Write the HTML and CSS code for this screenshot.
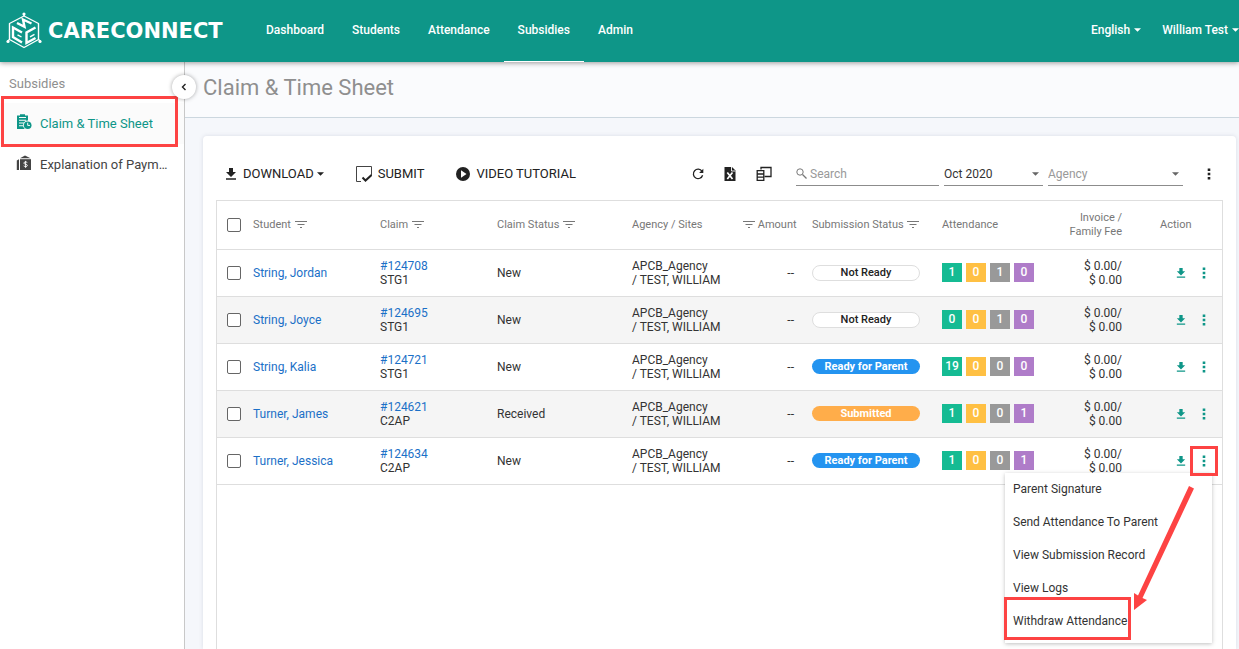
FILE: index.html
```html
<!DOCTYPE html>
<html lang="en">
<head>
<meta charset="utf-8">
<title>Claim &amp; Time Sheet</title>
<link rel="stylesheet" href="styles.css">
</head>
<body>
<svg class="sprite" aria-hidden="true">
  <symbol id="i-filter" viewBox="0 0 12 8"><path d="M0 1.500h12M2.500 4.500h7M5 7.500h2" fill="none" stroke="currentColor"/></symbol>
  <symbol id="i-download" viewBox="0 0 12 12"><path d="M4 0h4v4h3L6 9 1 4h3zM1 10.200h10v1.600H1z" fill="currentColor"/></symbol>
  <symbol id="i-dots" viewBox="0 0 4 12"><path d="M.7.5h2.600v2.600H.7zM.7 4.700h2.600v2.600H.7zM.7 8.900h2.600v2.600H.7z" fill="currentColor"/></symbol>
  <symbol id="i-caret" viewBox="0 0 8 4"><path d="M0 0h8L4 4z" fill="currentColor"/></symbol>
</svg>

<header class="topbar">
  <a class="brand" href="#">
    <svg class="brand-mark" viewBox="0 0 36 38" aria-hidden="true">
      <g fill="none" stroke="#fff" stroke-width="1.400" stroke-linejoin="round">
        <path d="M18 4 32.500 11.500V27.500L18 35.500 3.500 27.500V11.500z"/>
        <path d="M18 1v3M1.500 29l2-1.500M34.500 29l-2-1.500"/>
      </g>
      <g fill="none" stroke="#fff" stroke-width="2.400">
        <path d="m11 11 7.500 3.800-1.500-7.300 8.500 4"/>
        <path d="M16 20.500 7 15.500v9.500l9 5.500"/>
        <path d="M29.500 15.500 20.500 20.500v10.500l9-5"/>
        <path d="m15.500 25-4-2.200M24 24.800l4.500-2.500" stroke-width="1.400"/>
      </g>
      <circle cx="18" cy="2" r="1.600" fill="#fff"/><circle cx="2" cy="29.500" r="1.600" fill="#fff"/><circle cx="34" cy="29.500" r="1.600" fill="#fff"/>
    </svg>
    <span class="brand-name">CARECONNECT</span>
  </a>
  <nav class="mainnav">
    <a href="#">Dashboard</a>
    <a href="#">Students</a>
    <a href="#">Attendance</a>
    <a class="active" href="#">Subsidies</a>
    <a href="#">Admin</a>
  </nav>
  <div class="account">
    <button type="button">English <svg class="caret"><use href="#i-caret"/></svg></button>
    <button type="button">William Test <svg class="caret"><use href="#i-caret"/></svg></button>
  </div>
</header>

<div class="shell">
  <aside class="sidebar">
    <h2 class="side-title">Subsidies</h2>
    <nav class="sidenav">
      <a class="active marked" href="#">
        <svg viewBox="0 0 16 16" aria-hidden="true"><path d="M1 1.500h3V.3h5v1.200h3V15H1z" fill="currentColor"/><path d="M3 3.500h7M3 6.300h7M3 9h7M3 11.800h7" stroke="#fbfbfb" stroke-width="1.100" fill="none"/><circle cx="11.700" cy="11.200" r="4.700" fill="#fbfbfb"/><circle cx="11.700" cy="11.200" r="3.800" fill="currentColor"/><path d="M11.700 8.700v2.700H14" fill="none" stroke="#fbfbfb"/></svg>
        <span>Claim &amp; Time Sheet</span>
      </a>
      <a href="#">
        <svg viewBox="0 0 16 16" aria-hidden="true"><path d="M4 3.300 9 .5l5.500 2.800z" fill="currentColor"/><path d="M4 4.200h11V15H4z" fill="currentColor"/><path d="m.8 5.500 2.200-1.300V15H.8z" fill="currentColor"/><path d="M11.300 7.500c-1-.8-3.500-.7-3.500.6 0 1.500 3.600.8 3.600 2.300 0 1.400-2.600 1.500-3.700.5M9.600 5.900v7" fill="none" stroke="#fff" stroke-width=".9"/></svg>
        <span>Explanation of Payments</span>
      </a>
    </nav>
    <button class="collapse" type="button" aria-label="Collapse menu"><svg viewBox="0 0 6 8"><path d="M4.500 1 1.500 4l3 3" fill="none" stroke="#222" stroke-width="1.400"/></svg></button>
  </aside>

  <main class="main">
    <div class="pagehead"><h1>Claim &amp; Time Sheet</h1></div>
    <section class="card">
      <div class="toolbar">
        <div class="actions">
          <button type="button"><svg class="i12"><use href="#i-download"/></svg>DOWNLOAD<svg class="caret"><use href="#i-caret"/></svg></button>
          <button type="button"><svg class="i16" viewBox="0 0 16 16"><path d="M5 15.500H.5V.5h15v9" fill="none" stroke="#444"/><path d="m6.500 11.500 3 3 6-5.500" fill="none" stroke="#222" stroke-width="2"/></svg>SUBMIT</button>
          <button type="button"><svg class="i14" viewBox="0 0 14 14"><circle cx="7" cy="7" r="7" fill="#222"/><path d="M5 3.200 10.500 7 5 10.800z" fill="#fff"/></svg>VIDEO TUTORIAL</button>
        </div>
        <div class="tools">
          <button type="button" aria-label="Refresh"><svg class="i12" viewBox="0 0 12 12"><path d="M10 3.300A4.700 4.700 0 1 0 10.600 7.200" fill="none" stroke="#222" stroke-width="1.300"/><path d="M11.300.8v4.200H7.100z" fill="#222"/></svg></button>
          <button type="button" aria-label="Export to Excel"><svg class="i14" viewBox="0 0 14 14"><path d="M1.500 0H9l3.500 3.500V14h-11z" fill="#222"/><path d="M8.500 0v4h4" fill="none" stroke="#fff" stroke-width=".9"/><path d="m4.300 5.500 5.200 6.500M9.500 5.500 4.300 12" stroke="#fff" stroke-width="1.700"/></svg></button>
          <button type="button" aria-label="Choose columns"><svg class="i16" viewBox="0 0 16 16"><g fill="none" stroke="#222" stroke-width="1.300"><path d="M5 3.500V1.500h10v9H8.500"/><path d="M1.200 4.600h6.600v9.800H1.200zM1 8h7M1 11.200h7"/></g></svg></button>
        </div>
        <div class="filters">
          <label class="field search"><svg viewBox="0 0 11 11"><circle cx="4" cy="4" r="3.200" fill="none" stroke="#777"/><path d="m6.500 6.500 4 4" stroke="#777" stroke-width="1.300"/></svg><input type="text" placeholder="Search" aria-label="Search"></label>
          <label class="field month"><select aria-label="Month"><option>Oct 2020</option></select><svg class="caret"><use href="#i-caret"/></svg></label>
          <label class="field agency"><select aria-label="Agency"><option>Agency</option></select><svg class="caret"><use href="#i-caret"/></svg></label>
        </div>
        <button class="more" type="button" aria-label="More"><svg class="dots"><use href="#i-dots"/></svg></button>
      </div>

      <div class="grid">
        <table>
          <colgroup><col class="c-check"><col class="c-student"><col class="c-claim"><col class="c-status"><col class="c-agency"><col class="c-amount"><col class="c-sub"><col class="c-att"><col class="c-fee"><col class="c-act"></colgroup>
          <thead>
            <tr>
              <th class="check"><input type="checkbox" aria-label="Select all"></th>
              <th>Student <svg class="filter"><use href="#i-filter"/></svg></th>
              <th>Claim <svg class="filter"><use href="#i-filter"/></svg></th>
              <th>Claim Status <svg class="filter"><use href="#i-filter"/></svg></th>
              <th>Agency / Sites</th>
              <th class="amount"><svg class="filter"><use href="#i-filter"/></svg> Amount</th>
              <th>Submission Status <svg class="filter"><use href="#i-filter"/></svg></th>
              <th>Attendance</th>
              <th class="fee">Invoice /<br>Family Fee</th>
              <th class="act-head">Action</th>
            </tr>
          </thead>
          <tbody>
            <tr>
              <td class="check"><input type="checkbox" aria-label="Select String, Jordan"></td>
              <td><a href="#">String, Jordan</a></td>
              <td><a href="#">#124708</a><br>STG1</td>
              <td>New</td>
              <td>APCB_Agency<br>/ TEST, WILLIAM</td>
              <td class="amount">--</td>
              <td><span class="pill plain">Not Ready</span></td>
              <td><div class="counts"><b class="g">1</b><b class="y">0</b><b class="s">1</b><b class="p">0</b></div></td>
              <td class="fee">$ 0.00/<br>$ 0.00</td>
              <td><div class="rowacts"><button type="button" aria-label="Download"><svg class="i10"><use href="#i-download"/></svg></button><button type="button" aria-label="Row menu"><svg class="dots"><use href="#i-dots"/></svg></button></div></td>
            </tr>
            <tr>
              <td class="check"><input type="checkbox" aria-label="Select String, Joyce"></td>
              <td><a href="#">String, Joyce</a></td>
              <td><a href="#">#124695</a><br>STG1</td>
              <td>New</td>
              <td>APCB_Agency<br>/ TEST, WILLIAM</td>
              <td class="amount">--</td>
              <td><span class="pill plain">Not Ready</span></td>
              <td><div class="counts"><b class="g">0</b><b class="y">0</b><b class="s">1</b><b class="p">0</b></div></td>
              <td class="fee">$ 0.00/<br>$ 0.00</td>
              <td><div class="rowacts"><button type="button" aria-label="Download"><svg class="i10"><use href="#i-download"/></svg></button><button type="button" aria-label="Row menu"><svg class="dots"><use href="#i-dots"/></svg></button></div></td>
            </tr>
            <tr>
              <td class="check"><input type="checkbox" aria-label="Select String, Kalia"></td>
              <td><a href="#">String, Kalia</a></td>
              <td><a href="#">#124721</a><br>STG1</td>
              <td>New</td>
              <td>APCB_Agency<br>/ TEST, WILLIAM</td>
              <td class="amount">--</td>
              <td><span class="pill blue">Ready for Parent</span></td>
              <td><div class="counts"><b class="g">19</b><b class="y">0</b><b class="s">0</b><b class="p">0</b></div></td>
              <td class="fee">$ 0.00/<br>$ 0.00</td>
              <td><div class="rowacts"><button type="button" aria-label="Download"><svg class="i10"><use href="#i-download"/></svg></button><button type="button" aria-label="Row menu"><svg class="dots"><use href="#i-dots"/></svg></button></div></td>
            </tr>
            <tr>
              <td class="check"><input type="checkbox" aria-label="Select Turner, James"></td>
              <td><a href="#">Turner, James</a></td>
              <td><a href="#">#124621</a><br>C2AP</td>
              <td>Received</td>
              <td>APCB_Agency<br>/ TEST, WILLIAM</td>
              <td class="amount">--</td>
              <td><span class="pill orange">Submitted</span></td>
              <td><div class="counts"><b class="g">1</b><b class="y">0</b><b class="s">0</b><b class="p">1</b></div></td>
              <td class="fee">$ 0.00/<br>$ 0.00</td>
              <td><div class="rowacts"><button type="button" aria-label="Download"><svg class="i10"><use href="#i-download"/></svg></button><button type="button" aria-label="Row menu"><svg class="dots"><use href="#i-dots"/></svg></button></div></td>
            </tr>
            <tr>
              <td class="check"><input type="checkbox" aria-label="Select Turner, Jessica"></td>
              <td><a href="#">Turner, Jessica</a></td>
              <td><a href="#">#124634</a><br>C2AP</td>
              <td>New</td>
              <td>APCB_Agency<br>/ TEST, WILLIAM</td>
              <td class="amount">--</td>
              <td><span class="pill blue">Ready for Parent</span></td>
              <td><div class="counts"><b class="g">1</b><b class="y">0</b><b class="s">0</b><b class="p">1</b></div></td>
              <td class="fee">$ 0.00/<br>$ 0.00</td>
              <td class="open">
                <div class="rowacts"><button type="button" aria-label="Download"><svg class="i10"><use href="#i-download"/></svg></button><button type="button" aria-label="Row menu" aria-expanded="true"><svg class="dots"><use href="#i-dots"/></svg></button></div>
                <div class="menu">
                  <button type="button">Parent Signature</button>
                  <button type="button">Send Attendance To Parent</button>
                  <button type="button">View Submission Record</button>
                  <button type="button">View Logs</button>
                  <button class="target" type="button">Withdraw Attendance</button>
                  <svg class="arrow" viewBox="0 0 64 128" aria-hidden="true"><path d="M59 2 64 4.500 12.500 114 17 116 4 126 4 109 8 111.500z" fill="#fd4343"/></svg>
                </div>
                <span class="ring"></span>
              </td>
            </tr>
          </tbody>
        </table>
      </div>
    </section>
  </main>
</div>
</body>
</html>
```

FILE: styles.css
```css
* { box-sizing: border-box; }
html, body { height: 100%; }
body {
  margin: 0;
  display: flex;
  flex-direction: column;
  overflow: hidden;
  background: #f5f7fb;
  color: #333;
  font-family: Roboto, "Liberation Sans", sans-serif;
  font-size: 12px;
  line-height: 14px;
}
a { color: inherit; text-decoration: none; }
button {
  padding: 0;
  border: 0;
  background: none;
  color: inherit;
  font: inherit;
  cursor: pointer;
}
svg { display: block; flex: none; }
.sprite { position: absolute; width: 0; height: 0; }
.caret { width: 7px; height: 4px; }
.dots { width: 4px; height: 12px; }
.i10 { width: 10px; height: 10px; }
.i12 { width: 12px; height: 12px; }
.i14 { width: 14px; height: 14px; }
.i16 { width: 16px; height: 16px; }

/* Top bar */
.topbar {
  position: relative;
  z-index: 2;
  flex: none;
  display: flex;
  height: 62px;
  background: #0e9688;
  color: #fff;
  box-shadow: 0 1px 5px rgba(0, 0, 0, .4);
  font-size: 12px;
  font-weight: 500;
}
.brand {
  display: flex;
  align-items: center;
  gap: 6px;
  width: 252px;
  padding-left: 6px;
}
.brand-mark { width: 36px; height: 38px; }
.brand-name {
  font-family: "DejaVu Sans", sans-serif;
  font-size: 21px;
  font-weight: 700;
  line-height: 24px;
}
.mainnav { display: flex; }
.mainnav a {
  display: flex;
  align-items: center;
  padding: 0 14px 2px;
  border-bottom: 1px solid transparent;
}
.mainnav .active { border-color: #fff; }
.account { display: flex; gap: 21px; margin-left: auto; padding-bottom: 2px; }
.account button { display: flex; align-items: center; gap: 4px; }

/* Side menu */
.shell { flex: 1; display: flex; min-height: 0; }
.sidebar {
  position: relative;
  flex: none;
  width: 185px;
  border-right: 1px solid #c8c8c8;
  background: #fff;
}
.side-title {
  margin: 0;
  padding: 15px 9px 12px;
  color: #8f8f8f;
  font-size: 13px;
  font-weight: 400;
  line-height: 14px;
}
.sidenav a {
  display: flex;
  align-items: center;
  gap: 8px;
  height: 41px;
  padding: 0 14px 0 16px;
  color: #444;
  font-size: 13px;
  line-height: 18px;
}
.sidenav svg { width: 16px; height: 16px; margin-bottom: 4px; }
.sidenav span {
  overflow: hidden;
  text-overflow: ellipsis;
  white-space: nowrap;
}
.sidenav .active { background: #fbfbfb; color: #0e9688; }
.marked { position: relative; }
.marked::after {
  content: "";
  position: absolute;
  inset: -7px 6px -3px 1px;
  border: 3px solid #fd4343;
}
.collapse {
  position: absolute;
  top: 13px;
  right: -12px;
  z-index: 1;
  display: grid;
  place-items: center;
  width: 24px;
  height: 24px;
  border-radius: 50%;
  background: #fff;
  box-shadow: 0 0 4px rgba(0, 0, 0, .35);
}
.collapse svg { width: 6px; height: 8px; }

/* Page */
.main { flex: 1; display: flex; flex-direction: column; min-width: 0; }
.pagehead {
  height: 56px;
  padding: 13px 18px;
  border-bottom: 1px solid #ccd7df;
  background: #fafbfd;
}
h1 {
  margin: 0;
  color: #8f8f8f;
  font-size: 22px;
  font-weight: 400;
  line-height: 26px;
}
.card {
  flex: 1;
  display: flex;
  flex-direction: column;
  margin: 18px 3px 0 18px;
  padding: 16px 13px 0;
  border-radius: 4px 4px 0 0;
  background: #fff;
  box-shadow: 0 0 4px rgba(60, 70, 110, .15);
}
.toolbar {
  display: flex;
  align-items: center;
  height: 48px;
  padding-bottom: 4px;
  color: #222;
}
.actions { display: flex; gap: 32px; padding-left: 9px; font-size: 13px; }
.actions button { display: flex; align-items: center; gap: 6px; }
.actions .caret { margin-left: -3px; }
.tools { display: flex; align-items: center; gap: 19px; margin-left: auto; }
.filters { display: flex; gap: 5px; margin-left: 24px; }
.field {
  position: relative;
  display: flex;
  align-items: center;
  height: 24px;
  border-bottom: 1px solid #8c8c8c;
  color: #666;
}
.field input, .field select {
  width: 100%;
  padding: 0;
  border: 0;
  outline: 0;
  appearance: none;
  background: none;
  color: #333;
  font: inherit;
}
.field input::placeholder { color: #999; }
.search { width: 143px; gap: 3px; }
.search svg { width: 11px; height: 11px; }
.month { width: 99px; }
.agency { width: 135px; }
.field.agency select { color: #999; }
.field .caret { position: absolute; right: 4px; }
.more { margin: 0 12px 0 24px; }

/* Claims table */
.grid { flex: 1; border: 1px solid #dedede; border-bottom: 0; }
table {
  width: 100%;
  table-layout: fixed;
  border-collapse: collapse;
}
.c-check { width: 36px; }
.c-student { width: 127px; }
.c-claim { width: 117px; }
.c-status { width: 135px; }
.c-agency { width: 110px; }
.c-amount { width: 70px; }
.c-sub { width: 130px; }
.c-att { width: 110px; }
.c-fee { width: 70px; }
.c-act { width: 100px; }
th, td {
  height: 47px;
  padding: 0;
  border-bottom: 1px solid #dedede;
  text-align: left;
  vertical-align: middle;
}
th { height: 48px; color: #777; font-size: 11px; font-weight: 400; }
tbody tr:nth-child(even) { background: #f5f5f5; }
td a { color: #1b70c7; }
th.check, td.check { padding-left: 10px; }
.check input {
  display: block;
  width: 14px;
  height: 14px;
  margin: 0;
  border: 1px solid #666;
  border-radius: 2px;
  appearance: none;
  background: #fff;
}
.filter { display: inline-block; width: 12px; height: 8px; margin-left: 1px; }
th.amount, td.amount { padding-right: 18px; text-align: right; white-space: nowrap; }
th.fee, td.fee { text-align: right; }
th.act-head { padding-left: 38px; }
.pill {
  display: block;
  width: 108px;
  border-radius: 8px;
  color: #fff;
  font-size: 11px;
  font-weight: 700;
  line-height: 15px;
  text-align: center;
}
.plain { border: 1px solid #dedede; background: #fff; color: #222; font-weight: 500; line-height: 14px; }
.blue { background: #2494f0; }
.orange { background: #ffad4a; }
.counts { display: flex; gap: 4px; }
.counts b {
  width: 20px;
  height: 19px;
  color: #fff;
  font-weight: 500;
  line-height: 18px;
  text-align: center;
}
.g { background: #15bb93; }
.y { background: #ffc043; }
.s { background: #999; }
.p { background: #af7cc9; }
.rowacts {
  display: flex;
  align-items: center;
  justify-content: flex-end;
  gap: 16px;
  padding-right: 16px;
  color: #0e9688;
}

/* Row menu and highlights */
.open { position: relative; }
.menu {
  position: absolute;
  top: 35px;
  right: 10px;
  width: 207px;
  padding-bottom: 5px;
  background: #fff;
  box-shadow: 0 1px 4px rgba(0, 0, 0, .25);
}
.menu button {
  display: block;
  width: 100%;
  height: 33px;
  padding: 0 8px;
  text-align: left;
}
.menu .target { position: relative; }
.target::after {
  content: "";
  position: absolute;
  inset: -8px 81px -2px -1px;
  border: 3px solid #fd4343;
}
.ring {
  position: absolute;
  top: 8px;
  right: 4px;
  width: 28px;
  height: 30px;
  border: 3px solid #fd4343;
}
.arrow {
  position: absolute;
  top: 11px;
  right: 18px;
  width: 64px;
  height: 128px;
}
```
